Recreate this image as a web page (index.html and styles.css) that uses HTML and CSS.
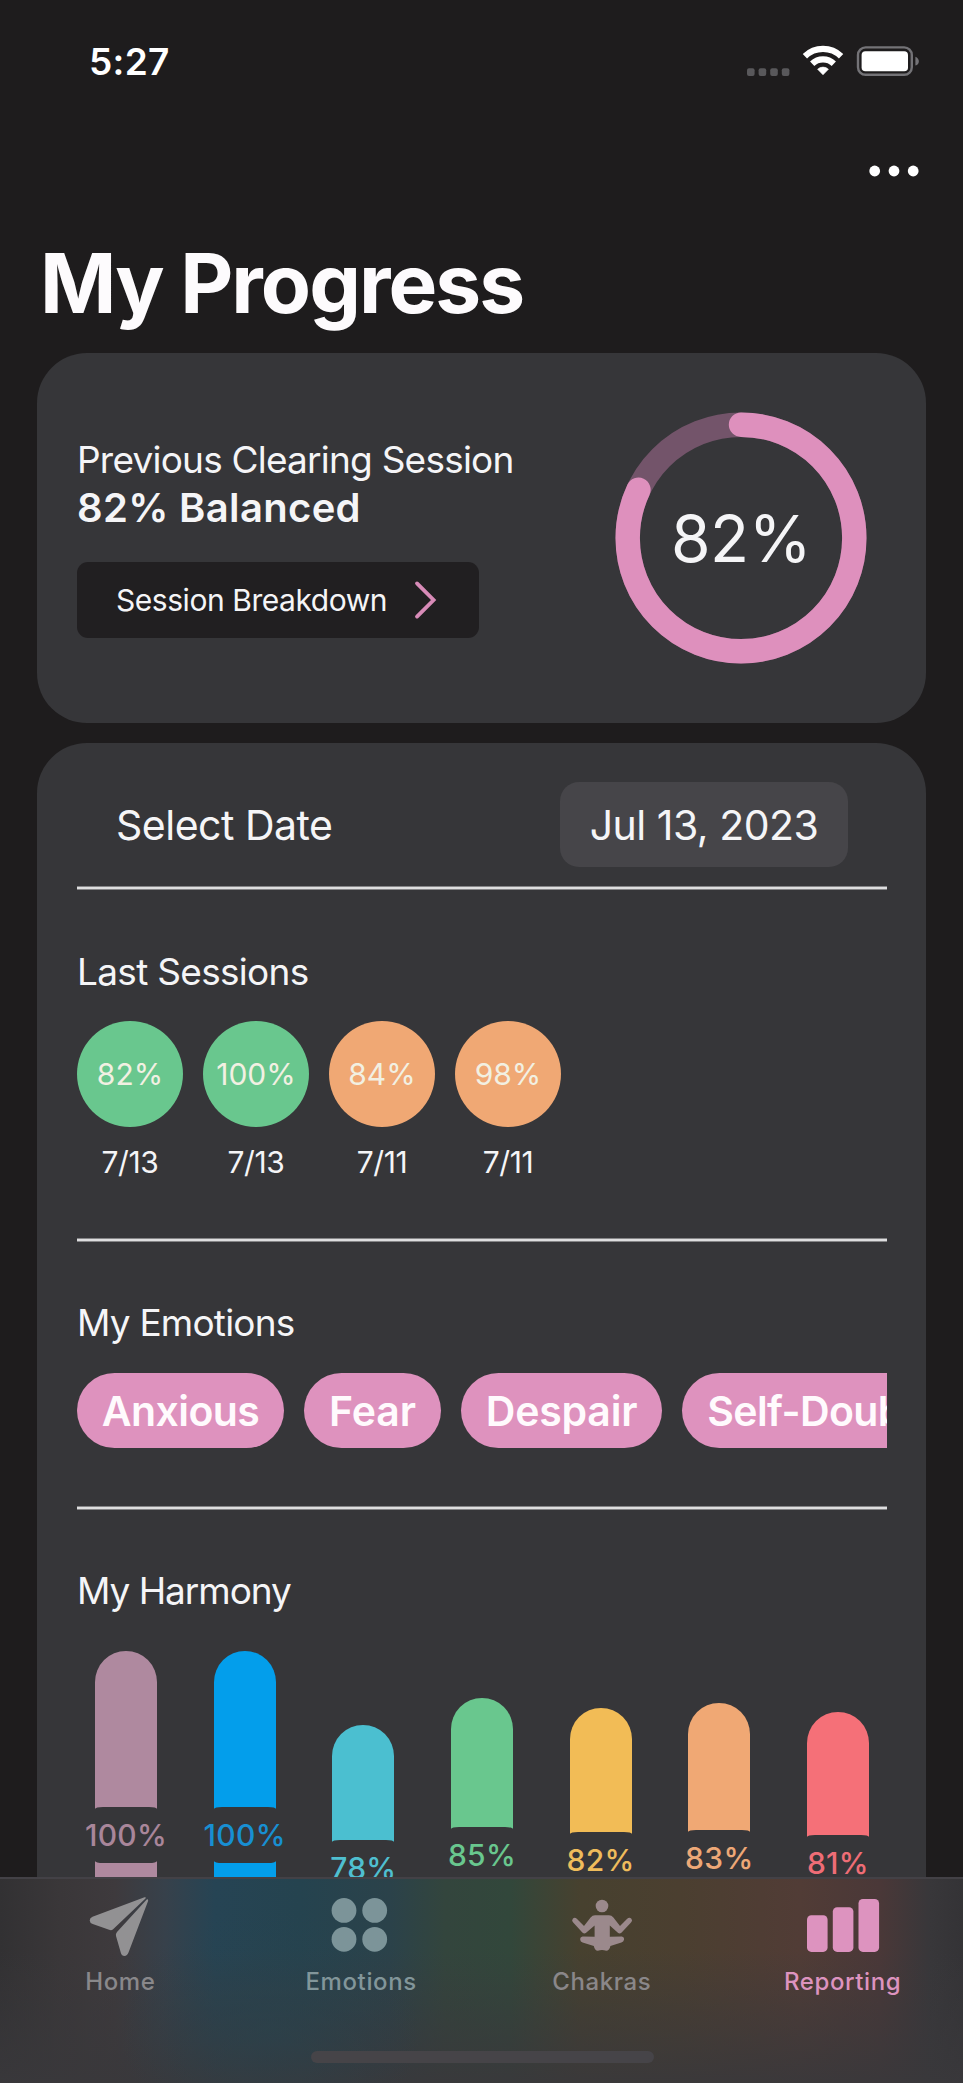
FILE: index.html
```html
<!DOCTYPE html>
<html lang="en">
<head>
<meta charset="utf-8">
<title>My Progress</title>
<link rel="stylesheet" href="styles.css">
</head>
<body>
<div class="screen">
  <header class="status">
    <span class="clock">5:27</span>
    <svg class="status-icons" width="176" height="40" viewBox="746 40 176 40">
      <g fill="#59585b">
        <rect x="747" y="66.3" width="7.6" height="7.6" rx="2"/><rect x="758.6" y="66.3" width="7.6" height="7.6" rx="2"/>
        <rect x="770.2" y="66.3" width="7.6" height="7.6" rx="2"/><rect x="781.8" y="66.3" width="7.6" height="7.6" rx="2"/>
      </g>
      <g fill="none" stroke="#fff" stroke-width="6.2">
        <path d="M804.9 54.3A26 26 0 0 1 841.1 54.3"/>
        <path d="M812.2 61.8A15.6 15.6 0 0 1 833.8 61.8"/>
      </g>
      <path d="M817.6 67.2A8 8 0 0 1 828.4 67.2L823 72.8Z" fill="#fff" stroke="#fff" stroke-width=".6"/>
      <rect x="858" y="45.4" width="53.8" height="27.4" rx="7.6" fill="none" stroke="#747377" stroke-width="2.4"/>
      <rect x="861.6" y="49.2" width="46.4" height="20" rx="3.8" fill="#fff"/>
      <path d="M915.4 54.8C920 56.4 920 62.4 915.4 63.6Z" fill="#747377"/>
    </svg>
  </header>
  <nav class="nav">
    <svg width="52" height="12" viewBox="0 0 52 12" fill="#fff"><circle cx="6.7" cy="6" r="5.4"/><circle cx="26" cy="6" r="5.4"/><circle cx="45.2" cy="6" r="5.4"/></svg>
  </nav>
  <h1 class="title"><span class="t-title">My Progress</span></h1>

  <section class="card summary">
    <div class="summary-text">
      <div class="label t-prev">Previous Clearing Session</div>
      <div class="balance t-balance">82% Balanced</div>
      <div class="breakdown">
        <span class="t-break">Session Breakdown</span>
        <svg width="22" height="38" viewBox="0 0 22 38"><path d="M2 2.4L18.6 19L2 35.6" fill="none" stroke="#d88bb8" stroke-width="3.8" stroke-linecap="round"/></svg>
      </div>
    </div>
    <div class="ring">
      <svg width="252" height="252" viewBox="0 0 252 252" fill="none" stroke-width="24.4">
        <circle cx="126" cy="126" r="113.3" stroke="#73546a"/>
        <circle cx="126" cy="126" r="113.3" stroke="#de90bd" stroke-linecap="round" pathLength="100" stroke-dasharray="82 100" transform="rotate(-90 126 126)"/>
      </svg>
      <span class="ring-value t-ring">82%</span>
    </div>
  </section>

  <section class="card details">
    <div class="date-row">
      <span class="t-select">Select Date</span>
      <span class="date-pill"><span class="t-date">Jul 13, 2023</span></span>
    </div>
    <div class="rule"></div>

    <h2 class="heading t-last">Last Sessions</h2>
    <div class="sessions">
      <div class="session"><div class="dot green">82%</div><div class="day">7/13</div></div>
      <div class="session"><div class="dot green">100%</div><div class="day">7/13</div></div>
      <div class="session"><div class="dot orange">84%</div><div class="day">7/11</div></div>
      <div class="session"><div class="dot orange">98%</div><div class="day">7/11</div></div>
    </div>
    <div class="rule"></div>

    <h2 class="heading t-emo">My Emotions</h2>
    <div class="chips">
      <span class="chip w1">Anxious</span>
      <span class="chip w2">Fear</span>
      <span class="chip w3">Despair</span>
      <span class="chip w4">Self-Doubt</span>
    </div>
    <div class="rule"></div>

    <h2 class="heading t-harm">My Harmony</h2>
    <div class="bars">
      <div class="bar mauve"><span class="pct">100%</span></div>
      <div class="bar blue"><span class="pct">100%</span></div>
      <div class="bar teal"><span class="pct">78%</span></div>
      <div class="bar leaf"><span class="pct">85%</span></div>
      <div class="bar gold"><span class="pct">82%</span></div>
      <div class="bar peach"><span class="pct">83%</span></div>
      <div class="bar coral"><span class="pct">81%</span></div>
    </div>
  </section>

  <footer class="tabs">
    <div class="tab home">
      <svg width="60" height="60" viewBox="0 0 60 60" fill="currentColor"><path d="M56 1.2Q58 .8 57 2.6L24.6 33.3Q22.8 34.9 20.6 33.8L4.2 28Q1.2 26.6 1.2 24.4Q1.2 22 4 20.8Z"/><path d="M58.2 3.6Q60 2.6 59.6 5L40 56.6Q38.6 60 36 60Q33.2 60 32.4 57L27.5 40Q26.9 37.8 28.5 36Z"/></svg>
      <span class="t-home">Home</span>
    </div>
    <div class="tab emotions">
      <svg width="60" height="60" viewBox="0 0 60 60" fill="currentColor"><circle cx="14.5" cy="14.4" r="12.4"/><circle cx="45.2" cy="14.4" r="12.4"/><circle cx="14.5" cy="43.3" r="12.4"/><circle cx="45.2" cy="43.3" r="12.4"/></svg>
      <span class="t-emotions">Emotions</span>
    </div>
    <div class="tab chakras">
      <svg width="60" height="60" viewBox="0 0 60 60" fill="currentColor"><circle cx="30" cy="9" r="6.3"/><path d="M23 18.3H37Q39.6 18.3 41.4 20.4L48 29L55.2 21.8Q57.5 19.8 59.4 21.8Q61 23.8 59 25.6L49.4 35.8Q47.6 37.4 45.9 35.8L37.8 28.4V39.8L49.8 39.6Q52.4 40.2 52 42.8Q51.6 45 49.4 45.4L38.4 49Q37.4 53.8 34.2 53.8Q30 52.4 25.8 53.8Q22.8 53.8 21.8 49L10.6 45.4Q8.4 45 8.2 42.8Q8 40.2 10.6 39.6L22.6 39.8V28.4L14.1 35.8Q12.4 37.4 10.6 35.8L1.2 25.6Q-.8 23.8 .8 21.8Q2.6 19.8 4.8 21.8L12 29L18.6 20.4Q20.4 18.3 23 18.3Z"/></svg>
      <span class="t-chakras">Chakras</span>
    </div>
    <div class="tab reporting">
      <svg width="74" height="60" viewBox="0 0 74 60" fill="currentColor"><rect x="1" y="18.3" width="20.6" height="36.6" rx="4.4"/><rect x="26.8" y="10.2" width="20.6" height="44.7" rx="4.4"/><rect x="52.5" y="2" width="20.6" height="52.9" rx="4.4"/></svg>
      <span class="t-reporting">Reporting</span>
    </div>
    <div class="home-indicator"></div>
  </footer>
</div>
</body>
</html>
```
FILE: styles.css
```css
* { box-sizing: border-box; }
body {
  margin: 0;
  background: #1e1c1d;
  color: #f5f5f7;
  font-family: Inter, "Liberation Sans", sans-serif;
}
h1, h2 { margin: 0; font-weight: 400; }
svg { display: block; flex: none; overflow: visible; }
span, .heading, .label, .balance { white-space: nowrap; }

.screen { position: relative; width: 963px; height: 2083px; overflow: hidden; }

.status { display: flex; justify-content: space-between; height: 123px; padding: 0 41px 0 89px; align-items: center; }
.clock { font-size: 37px; font-weight: 600; color: #fff; letter-spacing: .3px; }
.nav { display: flex; justify-content: flex-end; align-items: center; height: 96px; padding-right: 43px; }
.title { padding: 16px 0 20px 40px; font-size: 82px; line-height: 98px; font-weight: 700; color: #fdfbfd; }
.t-title { letter-spacing: -1.95px; }

.card { margin: 0 37px 20px; background: #363639; border-radius: 50px; }

.summary { display: flex; justify-content: space-between; height: 370px; padding: 84px 59px 0 40px; }
.label, .heading { font-size: 37px; line-height: 46px; }
.t-prev { letter-spacing: -.78px; }
.balance { margin-top: 1px; font-size: 40px; line-height: 48px; font-weight: 600; letter-spacing: .33px; }
.breakdown { display: flex; align-items: center; justify-content: space-between; width: 402px; height: 76px; margin-top: 30px; padding: 0 42px 0 39px; background: #211f21; border-radius: 11px; font-size: 30px; }
.t-break { letter-spacing: -.45px; }
.ring { display: grid; place-items: center; width: 252px; height: 252px; margin-top: -25px; }
.ring > * { grid-area: 1 / 1; }
.ring-value { font-size: 64px; font-weight: 380; letter-spacing: -.5px; }

.details { height: 1400px; padding: 39px 39px 0 40px; }
.date-row { display: flex; justify-content: space-between; align-items: center; height: 85px; padding: 0 39px 0 39px; font-size: 41px; letter-spacing: -.5px; }
.date-pill { display: flex; align-items: center; justify-content: center; width: 288px; height: 85px; background: #464549; border-radius: 19px; }
.rule { height: 4px; margin: 19px 0 59px; background: linear-gradient(#858587 1px, #dededf 1px 3px, #858587 3px); }
.t-last { letter-spacing: -.7px; }
.t-emo { letter-spacing: -.8px; }
.t-harm { letter-spacing: -1.05px; }

.sessions { display: flex; gap: 20px; margin-top: 26px; }
.session { display: flex; flex-direction: column; align-items: center; gap: 17px; }
.dot { display: flex; align-items: center; justify-content: center; width: 106px; height: 106px; border-radius: 50%; font-size: 30px; color: #f2f0e2; }
.day { font-size: 30px; line-height: 36px; letter-spacing: -.4px; }
.green { background: #69c78e; }
.orange { background: #f0a874; }
.sessions + .rule, .chips + .rule { margin-top: 58px; margin-bottom: 58px; }

.chips { display: flex; gap: 20px; margin-top: 27px; overflow: hidden; }
.chip { display: flex; flex: none; align-items: center; justify-content: center; height: 75px; border-radius: 38px; background: #de92be; color: #fffafd; font-size: 41px; font-weight: 600; }
.w1 { width: 207px; letter-spacing: -.6px; }
.w2 { width: 137px; }
.w3 { width: 201px; letter-spacing: -.2px; }
.w4 { width: 260px; letter-spacing: -.6px; }

.bars { display: flex; justify-content: space-between; padding: 0 18px; margin-top: 37px; }
.bar { display: flex; align-items: center; width: 62px; border-radius: 31px; }
.pct { display: flex; align-items: center; justify-content: center; width: 62px; height: 56px; border-radius: 8px / 2px; background: #363639; font-size: 30px; font-weight: 500; letter-spacing: .3px; }
.mauve { height: 368px; background: #af899f; color: #a9869a; }
.blue { height: 368px; background: #039eeb; color: #188fd2; }
.teal { height: 286px; margin-top: 74px; background: #4bbfd0; color: #4fbfd0; }
.leaf { height: 314px; margin-top: 47px; background: #69c78e; color: #69c78e; }
.gold { height: 304px; margin-top: 57px; background: #f2bc56; color: #efbc5c; }
.peach { height: 310px; margin-top: 52px; background: #f0a874; color: #eda877; }
.coral { height: 301px; margin-top: 61px; background: #f57078; color: #ef6d76; }

.tabs {
  position: absolute; left: 0; bottom: 0; display: flex; width: 963px; height: 206px; padding-top: 18px;
  border-top: 2px solid #434146;
  background:
    radial-gradient(ellipse 150px 120px at 270px 150px, rgba(42, 66, 76, .6), rgba(42, 66, 76, 0)),
    linear-gradient(rgba(57, 55, 59, 0) 35%, rgba(57, 56, 59, .92) 100%),
    linear-gradient(90deg, #323133 0, #3a3739 60px, #3e3a3d 115px, #37414b 165px, #264454 215px, #25434f 300px, #2b424a 390px, #33453d 445px, #32473b 510px, #47412f 580px, #4b3f30 680px, #513c36 800px, #4a3838 880px, #38373a 930px, #343336 963px);
}
.tab { display: flex; flex: 1; flex-direction: column; align-items: center; font-size: 24px; line-height: 30px; font-weight: 500; letter-spacing: .6px; }
.tab span { margin-top: 10px; }
.tab svg { transform: translate(-1.5px, -1px); }
.home { color: #929193; }
.emotions { color: #7c9499; }
.chakras { color: #9b898c; }
.reporting { color: #dd93bf; }
.t-home { color: #89888b; }
.t-emotions { color: #82969a; }
.t-chakras { color: #8a8789; }
.reporting svg, .chakras svg { transform: none; }
.home-indicator { position: absolute; left: 311px; bottom: 20px; width: 343px; height: 12px; border-radius: 6px; background: #464448; }
```
